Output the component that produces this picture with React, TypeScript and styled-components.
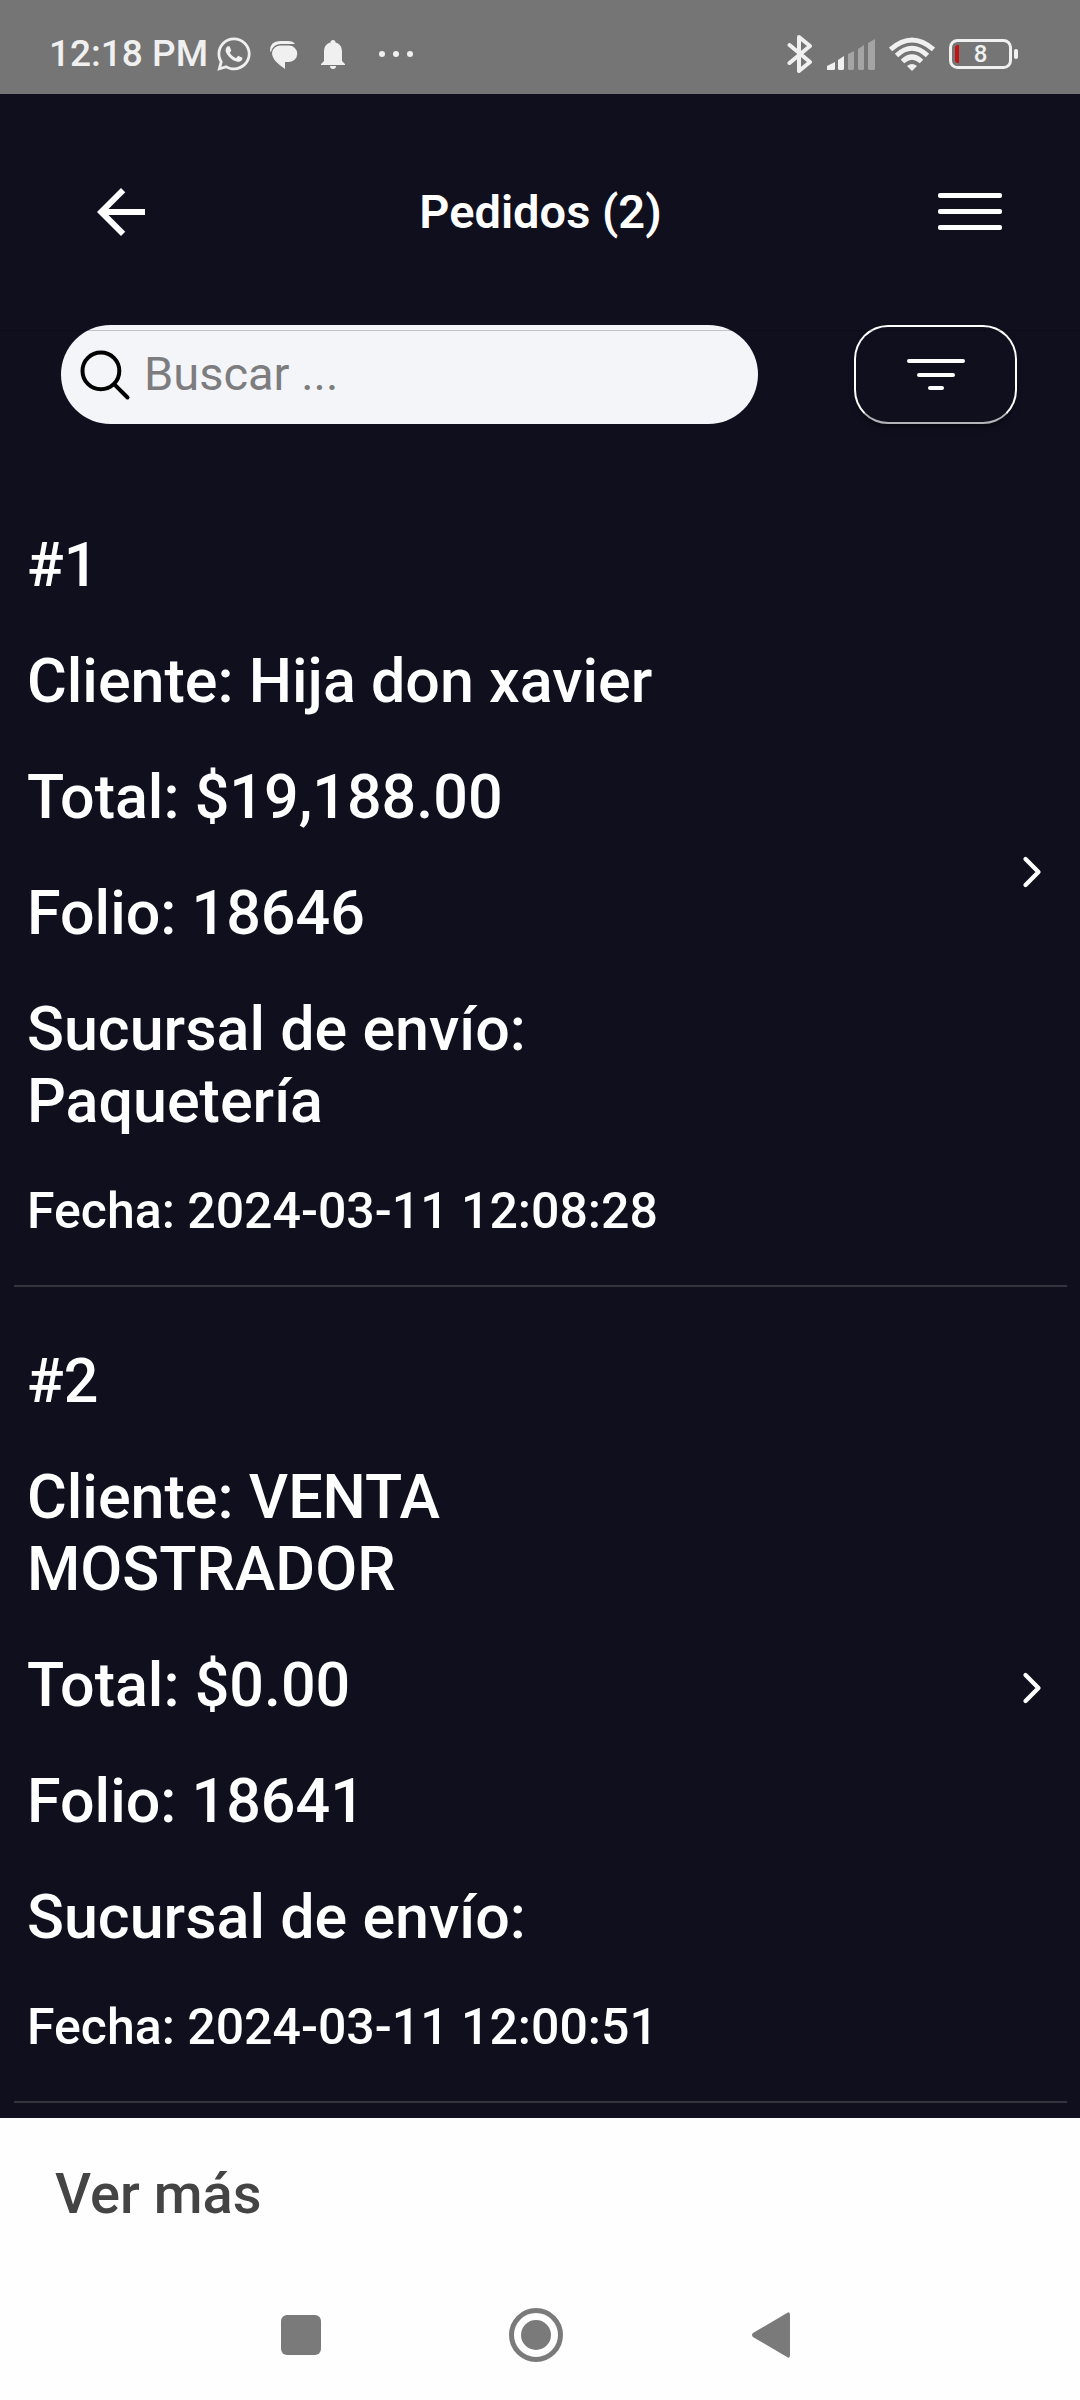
import React, { useState } from "react";
import styled, { createGlobalStyle } from "styled-components";
import { FaWhatsapp } from "react-icons/fa";
import { MdArrowBack } from "react-icons/md";

const GlobalStyle = createGlobalStyle`
  * { box-sizing: border-box; }
  body {
    margin: 0;
    background: #fefefe;
    font-family: Roboto, "Liberation Sans", sans-serif;
    font-weight: 500;
  }
  button { font: inherit; border: 0; background: none; padding: 0; cursor: pointer; }
  svg { display: block; flex: none; }
`;

const Screen = styled.div`
  display: flex;
  flex-direction: column;
  min-height: 100vh;
`;

const StatusBar = styled.div`
  display: flex;
  align-items: center;
  justify-content: space-between;
  height: 94px;
  padding: 14px 62px 0 49px;
  background: #757575;
  color: #f0f0f0;
`;

const StatusGroup = styled.div<{ $gap: number }>`
  display: flex;
  align-items: center;
  gap: ${(p) => p.$gap}px;
`;

const Clock = styled.time`
  font-size: 37px;
  line-height: 40px;
`;

const Battery = styled.div`
  display: grid;
  align-items: center;
  justify-items: center;
  > * { grid-area: 1 / 1; }
`;

const BatteryLevel = styled.span`
  font-size: 24px;
  line-height: 40px;
  padding-right: 6px;
`;

const Page = styled.main`
  flex: 1;
  background: #0f0f1e;
  color: #fff;
`;

const Header = styled.header`
  display: grid;
  grid-template-columns: 72px 1fr 72px;
  align-items: center;
  height: 231px;
  padding: 5px 74px 0 85px;
`;

const Title = styled.h1`
  margin: 0;
  padding-right: 10px;
  font-size: 47px;
  line-height: 56px;
  font-weight: 600;
  text-align: center;
`;

const IconButton = styled.button`
  display: grid;
  place-items: center;
  width: 72px;
  height: 72px;
  color: #fff;
`;

const SearchRow = styled.form`
  position: relative;
  display: flex;
  justify-content: space-between;
  gap: 96px;
  padding: 0 63px 0 61px;
  &::after {
    content: "";
    position: absolute;
    inset: 5px 0 auto;
    height: 1px;
    background: rgba(0, 0, 0, 0.2);
  }
`;

const SearchBox = styled.label`
  flex: 1;
  min-width: 0;
  display: flex;
  align-items: center;
  gap: 9px;
  height: 99px;
  padding: 0 14px;
  border-radius: 50px;
  background: #f4f5f9;
  color: #000;
`;

const SearchInput = styled.input`
  flex: 1;
  min-width: 0;
  border: 0;
  outline: 0;
  padding: 0 0 2px;
  background: none;
  font: 400 47px/56px Roboto, "Liberation Sans", sans-serif;
  color: #222;
  &::placeholder { color: #7d7d7f; opacity: 1; }
`;

const FilterButton = styled.button`
  flex: none;
  display: grid;
  place-items: center;
  width: 163px;
  height: 99px;
  && { border: 2px solid #fff; border-bottom-color: #b4b4b8; }
  border-radius: 34px;
  box-shadow: 0 4px 6px -2px rgba(0, 0, 0, 0.6);
`;

const OrderList = styled.ul`
  list-style: none;
  margin: 0;
  padding: 47px 13px 14px 14px;
`;

const OrderLink = styled.a`
  display: flex;
  align-items: center;
  justify-content: space-between;
  padding: 0 12px 0 13px;
  border-bottom: 2px solid #34343f;
  color: inherit;
  text-decoration: none;
`;

const OrderInfo = styled.div`
  display: flex;
  flex-direction: column;
  gap: 44px;
  width: 68%;
  padding: 58px 0 44px;
`;

const OrderLine = styled.p<{ $small?: boolean }>`
  margin: 0;
  font-size: ${(p) => (p.$small ? 50 : 61)}px;
  line-height: ${(p) => (p.$small ? 60 : 72)}px;
`;

const Chevron = styled.svg`
  margin-bottom: 12px;
`;

const MoreBar = styled.footer`
  padding: 42px 55px;
`;

const MoreButton = styled.button`
  display: block;
  color: #444;
  && { font-size: 56px; line-height: 68px; }
`;

const SystemNav = styled.nav`
  display: grid;
  grid-template-columns: repeat(3, 1fr);
  height: 130px;
  padding: 0 192px 0 184px;
  color: #7a7a7a;
`;

const NavButton = styled.button`
  display: grid;
  place-items: center;
  color: inherit;
`;

type Order = { client: string; total: string; folio: string; branch: string; date: string };

const orders: Order[] = [
  { client: "Hija don xavier", total: "$19,188.00", folio: "18646", branch: "Paquetería", date: "2024-03-11 12:08:28" },
  { client: "VENTA MOSTRADOR", total: "$0.00", folio: "18641", branch: "", date: "2024-03-11 12:00:51" },
];

const ChatIcon = () => (
  <svg width="34" height="40" viewBox="0 0 34 40" fill="currentColor" aria-hidden="true">
    <path d="M0 17 Q0 7 10 7 H18 Q23 7 25 10 H11 Q3 10 1 18Z" />
    <path d="M11 11.500 H19 A8.250 8.250 0 0 1 19 28 H15 V35 C8 30 2 25 2 19 A8.500 8 0 0 1 11 11.500Z" />
  </svg>
);

const BellIcon = () => (
  <svg width="24" height="40" viewBox="0 0 24 40" fill="currentColor" aria-hidden="true">
    <path d="M12 6 a2.500 2.500 0 0 1 2.500 2.500 C19 9.500 21 13 21 18 V27 L24 30 V31 H0 V30 L3 27 V18 C3 13 5 9.500 9.500 8.500 A2.500 2.500 0 0 1 12 6Z" />
    <path d="M9 32 H15 A3 3 0 0 1 9 32Z" />
  </svg>
);

const DotsIcon = () => (
  <svg width="51" height="40" viewBox="-17 0 51 40" fill="currentColor" aria-hidden="true">
    <circle cx="3" cy="20" r="3" />
    <circle cx="17" cy="20" r="3" />
    <circle cx="31" cy="20" r="3" />
  </svg>
);

const BluetoothIcon = () => (
  <svg width="26" height="40" viewBox="0 0 26 40" fill="none" stroke="currentColor" strokeWidth="4" strokeLinejoin="round" strokeLinecap="round" aria-hidden="true">
    <path d="M2.500 11 L23 28 L12 37 V3 L23 12 L2.500 29" />
  </svg>
);

const SignalIcon = () => (
  <svg width="48" height="40" viewBox="0 0 48 40" fill="currentColor" aria-hidden="true">
    <path d="M0 36 V32 L8 28 V35 L7 36 H1Z" />
    <path d="M11 35 V26 L17 22 V35 L16 36 H12Z" />
    <g opacity="0.38">
      <path d="M21 35 V20 L27 17 V35 L26 36 H22Z" />
      <path d="M31 35 V15 L37 11 V35 L36 36 H32Z" />
      <path d="M41 35 V9 L48 5 V35 L47 36 H42Z" />
    </g>
  </svg>
);

const WifiIcon = () => (
  <svg width="46" height="40" viewBox="0 0 46 40" fill="none" stroke="currentColor" strokeWidth="5" aria-hidden="true">
    <path d="M1.500 15.500 Q23 -3.500 44.500 15.500" />
    <path d="M7.500 21.500 Q23 7 38.500 21.500" />
    <path d="M13.500 27.500 Q23 18.500 32.500 27.500" />
    <path d="M18 32 Q23 28 28 32 L23 37Z" fill="currentColor" stroke="none" />
  </svg>
);

const BatteryIcon = () => (
  <svg width="69" height="40" viewBox="0 0 69 40" aria-hidden="true">
    <rect x="1.500" y="6.500" width="60" height="27" rx="7" fill="none" stroke="currentColor" strokeWidth="3" />
    <rect x="65" y="15" width="4" height="10" rx="2" fill="currentColor" />
    <path d="M10 11 V29 H9 Q6 29 6 26 V14 Q6 11 9 11Z" fill="#c51313" />
  </svg>
);

export default function App() {
  const [query, setQuery] = useState("");
  return (
    <Screen>
      <GlobalStyle />
      <StatusBar>
        <StatusGroup $gap={7}>
          <Clock>12:18 PM</Clock>
          <StatusGroup $gap={17}>
            <FaWhatsapp size={38} aria-hidden="true" />
            <ChatIcon />
            <BellIcon />
            <DotsIcon />
          </StatusGroup>
        </StatusGroup>
        <StatusGroup $gap={14}>
          <BluetoothIcon />
          <SignalIcon />
          <WifiIcon />
          <Battery>
            <BatteryIcon />
            <BatteryLevel>8</BatteryLevel>
          </Battery>
        </StatusGroup>
      </StatusBar>

      <Page>
        <Header>
          <IconButton type="button" aria-label="Volver">
            <MdArrowBack size={72} />
          </IconButton>
          <Title>Pedidos (2)</Title>
          <IconButton type="button" aria-label="Menú">
            <svg width="64" height="38" viewBox="0 0 64 38" fill="currentColor" aria-hidden="true">
              <rect width="64" height="5" y="0" rx="2" />
              <rect width="64" height="5" y="16" rx="2" />
              <rect width="64" height="5" y="32" rx="2" />
            </svg>
          </IconButton>
        </Header>

        <SearchRow role="search" onSubmit={(e) => e.preventDefault()}>
          <SearchBox>
            <svg width="60" height="60" viewBox="0 0 512 512" fill="none" stroke="currentColor" strokeWidth="34" strokeLinecap="round" aria-hidden="true">
              <circle cx="221" cy="221" r="157" />
              <path d="M338 338 L448 448" />
            </svg>
            <SearchInput
              type="text"
              aria-label="Buscar"
              placeholder="Buscar ..."
              value={query}
              onChange={(e) => setQuery(e.target.value)}
            />
          </SearchBox>
          <FilterButton type="button" aria-label="Filtrar">
            <svg width="58" height="32" viewBox="0 0 58 32" fill="#fff" aria-hidden="true">
              <rect x="0" y="0" width="58" height="4" rx="2" />
              <rect x="10" y="14" width="38" height="4" rx="2" />
              <rect x="21" y="27" width="16" height="4" rx="2" />
            </svg>
          </FilterButton>
        </SearchRow>

        <OrderList>
          {orders.map((order, i) => (
            <li key={order.folio}>
              <OrderLink href={`#pedido-${order.folio}`}>
                <OrderInfo>
                  <OrderLine>{`#${i + 1}`}</OrderLine>
                  <OrderLine>{`Cliente: ${order.client}`}</OrderLine>
                  <OrderLine>{`Total: ${order.total}`}</OrderLine>
                  <OrderLine>{`Folio: ${order.folio}`}</OrderLine>
                  <OrderLine>{`Sucursal de envío: ${order.branch}`}</OrderLine>
                  <OrderLine $small>{`Fecha: ${order.date}`}</OrderLine>
                </OrderInfo>
                <Chevron width="46" height="46" viewBox="0 0 512 512" fill="none" stroke="currentColor" strokeWidth="48" strokeLinecap="round" strokeLinejoin="round" aria-hidden="true">
                  <path d="M184 112 L328 256 L184 400" />
                </Chevron>
              </OrderLink>
            </li>
          ))}
        </OrderList>
      </Page>

      <MoreBar>
        <MoreButton type="button">Ver más</MoreButton>
      </MoreBar>
      <SystemNav aria-label="Sistema">
        <NavButton type="button" aria-label="Recientes">
          <svg width="40" height="40" viewBox="0 0 40 40" fill="currentColor" aria-hidden="true">
            <rect width="40" height="40" rx="6" />
          </svg>
        </NavButton>
        <NavButton type="button" aria-label="Inicio">
          <svg width="54" height="54" viewBox="0 0 54 54" aria-hidden="true">
            <circle cx="27" cy="27" r="24.500" fill="none" stroke="currentColor" strokeWidth="5" />
            <circle cx="27" cy="27" r="15" fill="currentColor" />
          </svg>
        </NavButton>
        <NavButton type="button" aria-label="Atrás">
          <svg width="38" height="46" viewBox="0 0 38 46" fill="currentColor" aria-hidden="true">
            <path d="M35 1 Q38 -1 38 3 V43 Q38 47 35 45 L1 25 Q-1 23 1 21Z" />
          </svg>
        </NavButton>
      </SystemNav>
    </Screen>
  );
}
